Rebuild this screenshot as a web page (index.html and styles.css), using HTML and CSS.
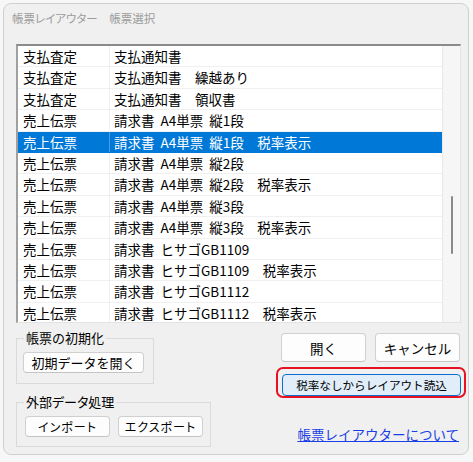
FILE: index.html
```html
<!DOCTYPE html>
<html lang="ja">
<head>
<meta charset="utf-8">
<link rel="stylesheet" href="styles.css">
</head>
<body>
<div class="window">
  <div class="title">帳票レイアウター　帳票選択</div>
  <div class="list">
    <div class="rows">
      <div class="row"><div class="c1">支払査定</div><div class="c2">支払通知書</div></div>
      <div class="row"><div class="c1">支払査定</div><div class="c2">支払通知書　繰越あり</div></div>
      <div class="row"><div class="c1">支払査定</div><div class="c2">支払通知書　領収書</div></div>
      <div class="row"><div class="c1">売上伝票</div><div class="c2">請求書 A4単票 縦1段</div></div>
      <div class="row sel"><div class="c1">売上伝票</div><div class="c2">請求書 A4単票 縦1段　税率表示</div></div>
      <div class="row"><div class="c1">売上伝票</div><div class="c2">請求書 A4単票 縦2段</div></div>
      <div class="row"><div class="c1">売上伝票</div><div class="c2">請求書 A4単票 縦2段　税率表示</div></div>
      <div class="row"><div class="c1">売上伝票</div><div class="c2">請求書 A4単票 縦3段</div></div>
      <div class="row"><div class="c1">売上伝票</div><div class="c2">請求書 A4単票 縦3段　税率表示</div></div>
      <div class="row"><div class="c1">売上伝票</div><div class="c2">請求書 ヒサゴGB1109</div></div>
      <div class="row"><div class="c1">売上伝票</div><div class="c2">請求書 ヒサゴGB1109　税率表示</div></div>
      <div class="row"><div class="c1">売上伝票</div><div class="c2">請求書 ヒサゴGB1112</div></div>
      <div class="row"><div class="c1">売上伝票</div><div class="c2">請求書 ヒサゴGB1112　税率表示</div></div>
    </div>
    <div class="scrollbar"><div class="thumb"></div></div>
  </div>
  <div class="bottom">
    <div class="left">
      <div class="group g1">
        <div class="legend">帳票の初期化</div>
        <div class="grow"><button class="btn b-init">初期データを開く</button></div>
      </div>
      <div class="group g2">
        <div class="legend">外部データ処理</div>
        <div class="grow">
          <button class="btn b-small">インポート</button>
          <button class="btn b-small">エクスポート</button>
        </div>
      </div>
    </div>
    <div class="right">
      <div class="main-btns">
        <button class="btn b-main">開く</button>
        <button class="btn b-main">キャンセル</button>
      </div>
      <div class="highlight">
        <button class="btn b-accent">税率なしからレイアウト読込</button>
      </div>
      <a class="link" href="#">帳票レイアウターについて</a>
    </div>
  </div>
</div>
</body>
</html>
```

FILE: styles.css
```css
html, body {
  margin: 0;
  padding: 0;
}
body {
  background: #f7f7f7;
  font-family: "Noto Sans CJK JP", "Noto Sans", sans-serif;
  color: #000;
}
.window {
  margin: 3px;
  width: 466px;
  height: 452px;
  box-sizing: border-box;
  border: 1px solid #d0d0d0;
  border-radius: 8px;
  background: #f0f0f0;
  padding: 0 7px 0 12px;
  overflow: hidden;
}
.title {
  height: 40px;
  box-sizing: border-box;
  padding-top: 6px;
  margin-left: -4px;
  font-size: 11.5px;
  line-height: 16px;
  color: #9c9c9c;
  font-feature-settings: "palt";
}
.list {
  height: 279px;
  box-sizing: border-box;
  border-top: 2px solid #8a8a8a;
  border-left: 2px solid #a0a0a0;
  border-right: 1px solid #e3e3e3;
  border-bottom: 1px solid #e3e3e3;
  background: #fff;
  display: flex;
  overflow: hidden;
}
.rows {
  flex: 1;
  overflow: hidden;
}
.row {
  display: flex;
  height: 21.4px;
  box-sizing: border-box;
  border-bottom: 1px solid #f0f0f0;
  font-size: 13.5px;
  line-height: 20px;
  white-space: nowrap;
}
.c1 {
  width: 92px;
  flex: none;
  box-sizing: border-box;
  padding-left: 5px;
  border-right: 1px solid #f0f0f0;
}
.c2 {
  padding-left: 4px;
  word-spacing: 3px;
}
.row.sel {
  background: #0078d7;
  color: #fff;
  border-bottom-color: #0078d7;
}
.row.sel .c1 {
  border-right-color: #4a9be0;
}
.scrollbar {
  width: 17px;
  flex: none;
  border-left: 1px solid #e8e8e8;
  background: #f6f6f6;
  display: flex;
  justify-content: center;
}
.thumb {
  width: 2px;
  height: 58px;
  margin-top: 150px;
  margin-left: 1px;
  border-radius: 1px;
  background: #8a8a8a;
}
.bottom {
  display: flex;
  justify-content: space-between;
}
.left {
  display: flex;
  flex-direction: column;
  padding-top: 15px;
}
.group {
  border: 1px solid #dadada;
  box-sizing: border-box;
}
.g1 {
  width: 138px;
  height: 46px;
}
.g2 {
  width: 195px;
  height: 45px;
  margin-top: 18px;
}
.legend {
  display: block;
  width: max-content;
  margin: -8px 0 0 7px;
  padding: 0 2px;
  background: #f0f0f0;
  font-size: 13px;
  line-height: 14px;
}
.g2 .legend {
  font-feature-settings: "palt";
}
.grow {
  display: flex;
  gap: 8px;
  padding-left: 6px;
  margin-top: 7px;
}
.g2 .grow {
  padding-left: 8px;
  margin-top: 7px;
}
.btn {
  font-family: inherit;
  box-sizing: border-box;
  background: #fdfdfd;
  border: 1px solid #d0d0d0;
  border-bottom-color: #c4c4c4;
  border-radius: 4px;
  padding: 0;
  color: #000;
  cursor: default;
}
.b-init {
  width: 121px;
  height: 21px;
  font-size: 13px;
  line-height: 18px;
}
.b-small {
  width: 85px;
  height: 21px;
  font-size: 12px;
  line-height: 18px;
  font-feature-settings: "palt";
  letter-spacing: 1px;
}
.right {
  display: flex;
  flex-direction: column;
  align-items: flex-end;
  padding-top: 10px;
}
.main-btns {
  display: flex;
  gap: 9px;
  margin-right: 1px;
}
.b-main {
  width: 85px;
  height: 29px;
  font-size: 13.5px;
  line-height: 26px;
}
.highlight {
  margin-top: 5px;
  margin-right: -5px;
  width: 190px;
  height: 31px;
  box-sizing: border-box;
  border: 2px solid #e81123;
  border-radius: 7px;
  padding: 2px 3px 0 4px;
}
.b-accent {
  width: 179px;
  height: 22px;
  background: #e1eefa;
  border: 1px solid #0a6fcf;
  font-size: 11.6px;
  line-height: 20px;
}
.link {
  margin-top: 27px;
  margin-right: 2px;
  font-size: 13.5px;
  line-height: 18px;
  color: #1a3fe6;
  text-decoration: underline;
}
```
